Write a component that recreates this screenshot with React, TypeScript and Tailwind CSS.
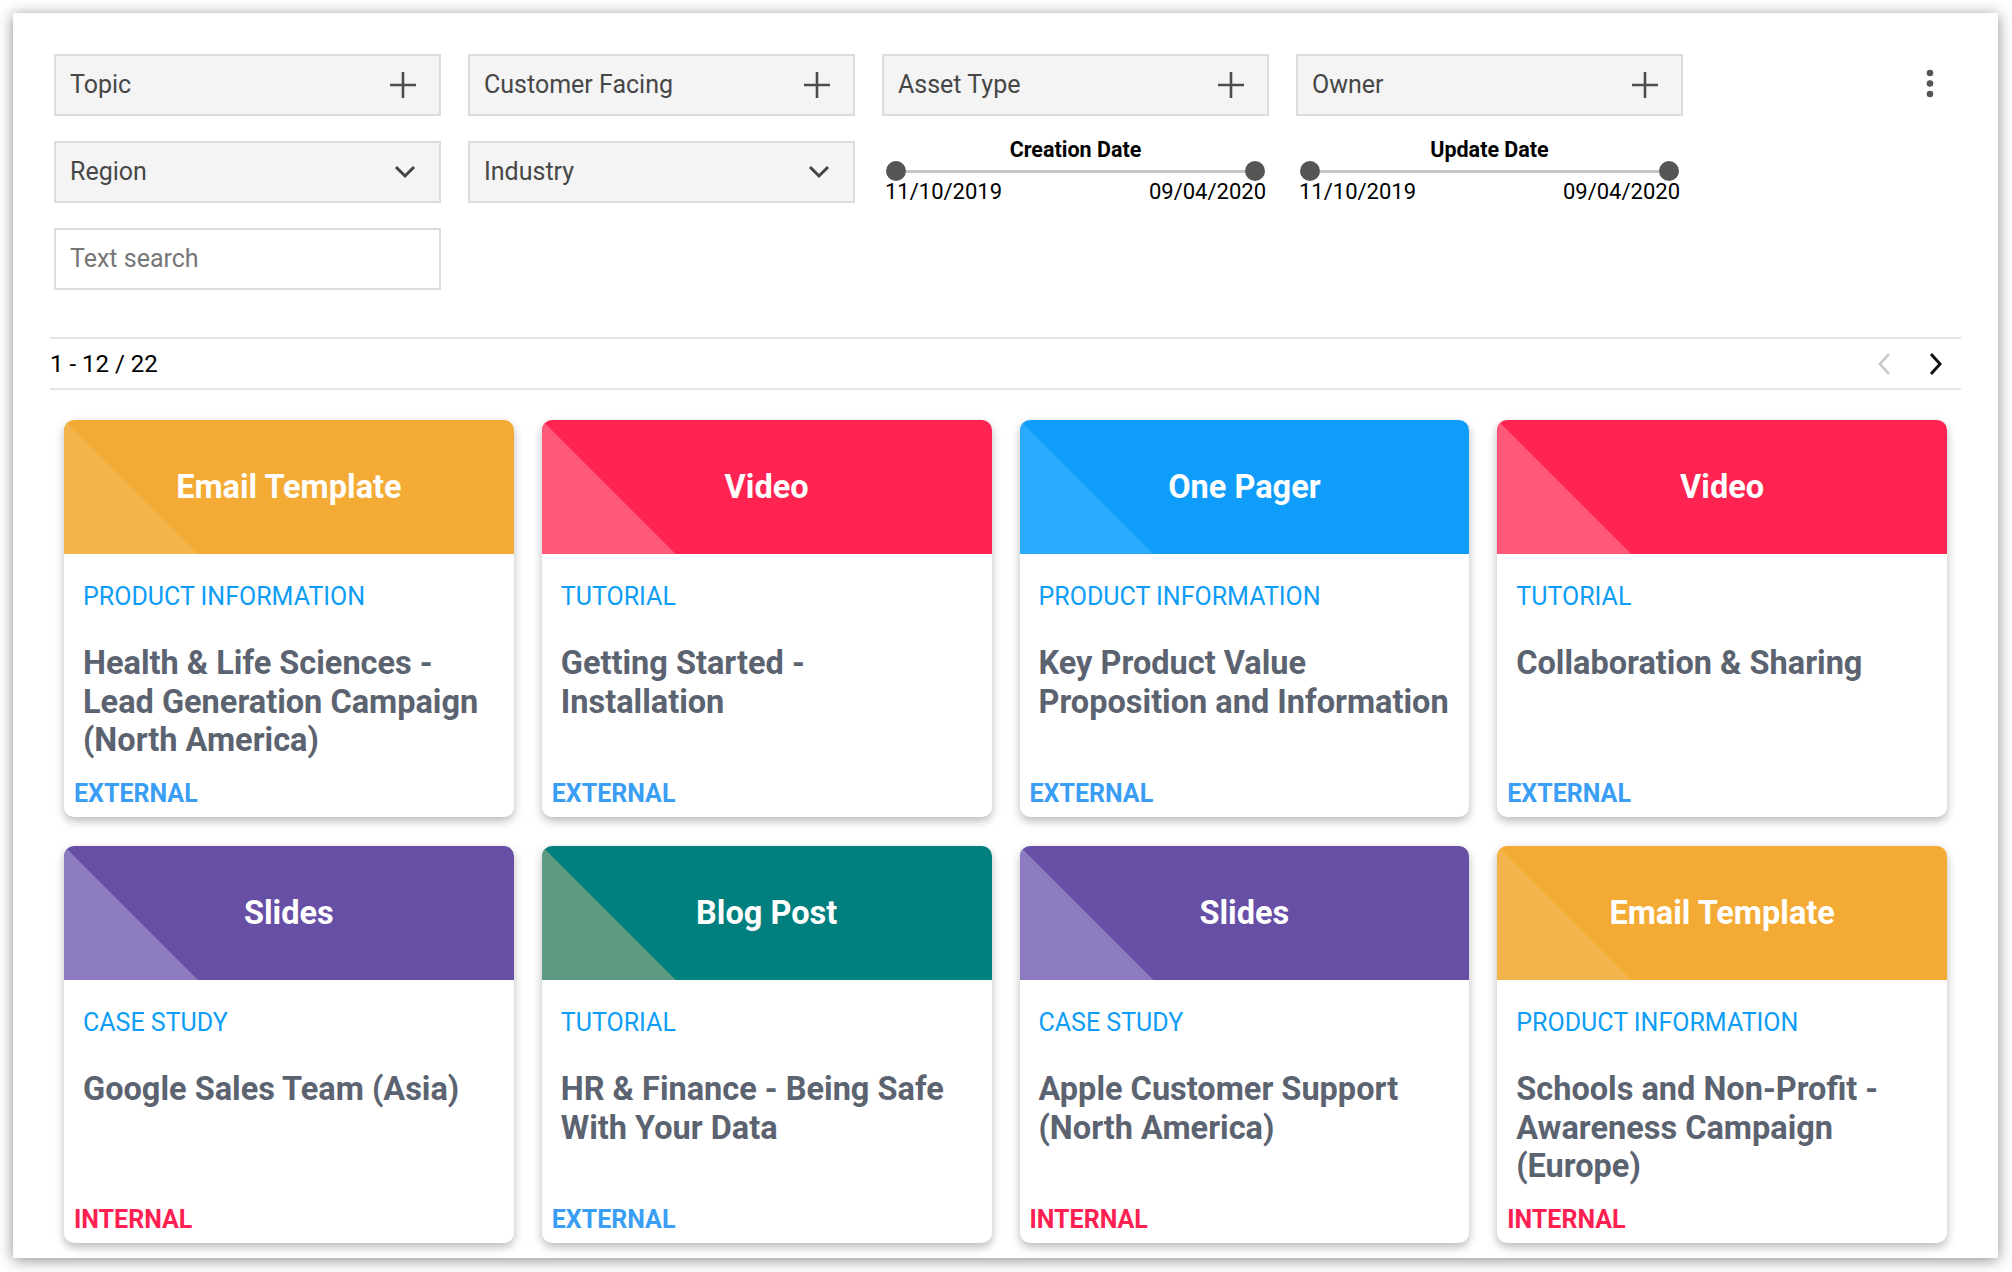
import React from 'react'

type Asset = {
  type: string
  bg: string
  tri: string
  category: string
  title: string[]
  audience: 'EXTERNAL' | 'INTERNAL'
}

const assets: Asset[] = [
  { type: 'Email Template', bg: 'bg-[#f3ab35]', tri: 'bg-[#f4b44c]', category: 'PRODUCT INFORMATION', title: ['Health & Life Sciences -', 'Lead Generation Campaign', '(North America)'], audience: 'EXTERNAL' },
  { type: 'Video', bg: 'bg-[#ff2352]', tri: 'bg-[#ff5878]', category: 'TUTORIAL', title: ['Getting Started -', 'Installation'], audience: 'EXTERNAL' },
  { type: 'One Pager', bg: 'bg-[#0f9dfb]', tri: 'bg-[#2aaafc]', category: 'PRODUCT INFORMATION', title: ['Key Product Value', 'Proposition and Information'], audience: 'EXTERNAL' },
  { type: 'Video', bg: 'bg-[#ff2352]', tri: 'bg-[#ff5878]', category: 'TUTORIAL', title: ['Collaboration & Sharing'], audience: 'EXTERNAL' },
  { type: 'Slides', bg: 'bg-[#684fa6]', tri: 'bg-[#8c7bbe]', category: 'CASE STUDY', title: ['Google Sales Team (Asia)'], audience: 'INTERNAL' },
  { type: 'Blog Post', bg: 'bg-[#007f7f]', tri: 'bg-[#5c9a82]', category: 'TUTORIAL', title: ['HR & Finance - Being Safe', 'With Your Data'], audience: 'EXTERNAL' },
  { type: 'Slides', bg: 'bg-[#684fa6]', tri: 'bg-[#8c7bbe]', category: 'CASE STUDY', title: ['Apple Customer Support', '(North America)'], audience: 'INTERNAL' },
  { type: 'Email Template', bg: 'bg-[#f3ab35]', tri: 'bg-[#f4b44c]', category: 'PRODUCT INFORMATION', title: ['Schools and Non-Profit -', 'Awareness Campaign', '(Europe)'], audience: 'INTERNAL' },
]

function PlusIcon() {
  return (
    <svg width="26" height="26" viewBox="0 0 26 26" fill="none" stroke="#4d4d4d" strokeWidth="2.6">
      <path d="M13 0v26M0 13h26" />
    </svg>
  )
}

function ChevronDown() {
  return (
    <svg width="22" height="14" viewBox="0 0 22 14" fill="none" stroke="#444" strokeWidth="3">
      <path d="M2 2l9 9 9-9" />
    </svg>
  )
}

function FilterBox({ label, kind }: { label: string; kind: 'plus' | 'select' }) {
  return (
    <div className="h-[62px] w-[387px] border-2 border-[#dcdcdc] bg-[#f4f4f4] flex items-center justify-between pl-[14px] pr-[23px]">
      <span className="text-[25px] text-[#474747]">{label}</span>
      {kind === 'plus' ? <PlusIcon /> : <ChevronDown />}
    </div>
  )
}

function DateRange({ label }: { label: string }) {
  return (
    <div className="h-[62px] w-[387px] flex flex-col">
      <div className="text-[21.5px] leading-[18px] font-bold text-black text-center">{label}</div>
      <div className="h-[22px] mt-[2px] flex items-center px-[4px]">
        <div className="w-[20px] h-[20px] rounded-full bg-[#555]" />
        <div className="flex-1 h-[3px] bg-[#c6c6c6]" />
        <div className="w-[20px] h-[20px] rounded-full bg-[#555]" />
      </div>
      <div className="flex justify-between px-[3px] text-[22px] leading-[22px] text-black">
        <span>11/10/2019</span>
        <span>09/04/2020</span>
      </div>
    </div>
  )
}

function Card({ a }: { a: Asset }) {
  return (
    <div className="h-[397px] rounded-[10px] bg-white overflow-hidden flex flex-col shadow-[0_4px_10px_rgba(0,0,0,0.28)]">
      <div className={`relative h-[134px] shrink-0 ${a.bg} flex items-center justify-center`}>
        <div className={`absolute left-0 top-0 w-[134px] h-[134px] ${a.tri} [clip-path:polygon(0_0,0_100%,100%_100%)]`} />
        <span className="relative text-white font-bold text-[32.5px]">{a.type}</span>
      </div>
      <div className="flex-1 flex flex-col pl-[19px] pr-[12px] pt-[29px]">
        <div className="text-[25px] leading-[28px] text-[#0d9df6]">{a.category}</div>
        <div className="mt-[33px] text-[32.5px] leading-[38.5px] font-bold text-[#5c6370]">
          {a.title.map((line, i) => (
            <div key={i} className="whitespace-nowrap">{line}</div>
          ))}
        </div>
      </div>
      <div
        className={`pl-[10px] pb-[8px] text-[25px] leading-[30px] font-bold ${
          a.audience === 'EXTERNAL' ? 'text-[#3a9ef5]' : 'text-[#ff2052]'
        }`}
      >
        {a.audience}
      </div>
    </div>
  )
}

export default function App() {
  return (
    <div className="w-[2012px] h-[1272px] bg-white pt-[13px] pl-[13px] font-['Roboto',_sans-serif]">
      <div className="w-[1985px] h-[1245px] bg-white shadow-[0_2px_14px_rgba(0,0,0,0.45)] px-[37px] pt-[41px]">
        <div className="flex pl-[4px]">
          <div className="grid grid-cols-[repeat(4,387px)] gap-x-[27px] gap-y-[25px]">
            <FilterBox label="Topic" kind="plus" />
            <FilterBox label="Customer Facing" kind="plus" />
            <FilterBox label="Asset Type" kind="plus" />
            <FilterBox label="Owner" kind="plus" />
            <FilterBox label="Region" kind="select" />
            <FilterBox label="Industry" kind="select" />
            <DateRange label="Creation Date" />
            <DateRange label="Update Date" />
            <div className="h-[62px] w-[387px] border-2 border-[#dcdcdc] bg-white flex items-center pl-[14px]">
              <span className="text-[25px] text-[#777]">Text search</span>
            </div>
          </div>
          <div className="ml-auto mr-[27px] pt-[15px]">
            <svg width="8" height="30" viewBox="0 0 8 30" fill="#555">
              <circle cx="4" cy="4" r="3.3" />
              <circle cx="4" cy="14.5" r="3.3" />
              <circle cx="4" cy="25" r="3.3" />
            </svg>
          </div>
        </div>

        <div className="mt-[47px] border-t-2 border-b-2 border-[#e4e4e4] h-[53px] flex items-center justify-between">
          <span className="text-[24px] text-black">1 - 12 / 22</span>
          <div className="flex items-center gap-[38px] pr-[18px]">
            <svg width="14" height="24" viewBox="0 0 14 24" fill="none" stroke="#c8c8c8" strokeWidth="2.6">
              <path d="M12 2L3 12l9 10" />
            </svg>
            <svg width="14" height="24" viewBox="0 0 14 24" fill="none" stroke="#111" strokeWidth="3">
              <path d="M2 2l9 10-9 10" />
            </svg>
          </div>
        </div>

        <div className="px-[14px] pt-[30px] grid grid-cols-4 gap-x-[28px] gap-y-[29px]">
          {assets.map((a, i) => (
            <Card key={i} a={a} />
          ))}
        </div>
      </div>
    </div>
  )
}
